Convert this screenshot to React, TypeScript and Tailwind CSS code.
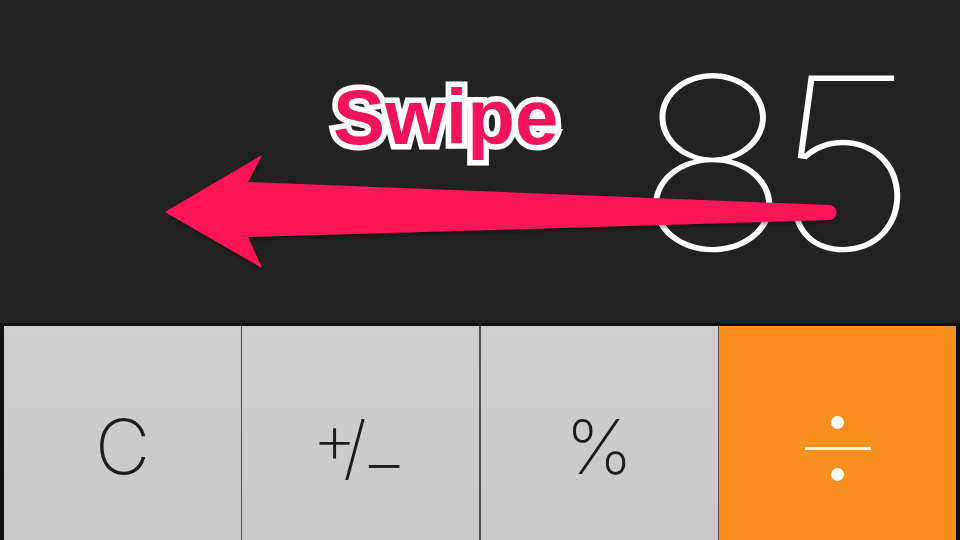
/**
 * CalculatorSwipe - iOS calculator display with a "Swipe" annotation arrow
 */

const KEYS = [
  { label: 'C', kind: 'fn' },
  { label: '+/-', kind: 'fn' },
  { label: '%', kind: 'fn' },
  { label: '÷', kind: 'op' },
] as const

/** Pink annotation arrow pointing left */
function SwipeArrow() {
  return (
    <svg
      className="absolute inset-0 pointer-events-none"
      width="960"
      height="326"
      viewBox="0 0 960 326"
    >
      <defs>
        <filter id="arrowShadow" x="-10%" y="-30%" width="120%" height="160%">
          <feDropShadow dx="1" dy="2" stdDeviation="2" floodColor="#000" floodOpacity="0.45" />
        </filter>
      </defs>
      <path
        d="M165 212 L262 155 L248 182 L829 205 A7.5 7.5 0 0 1 829 220 L248 237 L262 268 Z"
        fill="#ff1659"
        filter="url(#arrowShadow)"
      />
    </svg>
  )
}

function Key({ label, kind }: { label: string; kind: 'fn' | 'op' }) {
  if (kind === 'op') {
    return (
      <div className="h-full flex items-center justify-center bg-[#f7901c]">
        <div className="flex flex-col items-center gap-[18px] w-[66px] translate-y-[2px]" aria-label={label}>
          <span className="w-[13px] h-[13px] rounded-full bg-white" />
          <span className="w-full h-[3px] bg-[#fff4e0]" />
          <span className="w-[13px] h-[13px] rounded-full bg-white" />
        </div>
      </div>
    )
  }

  return (
    <div className="h-full flex items-center justify-center bg-gradient-to-b from-[#cdced1] to-[#c7c8cb] text-[#1c1c1c] font-extralight leading-none">
      {label === '+/-' ? (
        <span className="flex items-start text-[70px] leading-none -translate-x-[5px]">
          <span className="-translate-y-[8px]">+</span>
          <span className="-ml-[14px] translate-y-[1px]">/</span>
          <span className="ml-[2px] -translate-y-[6px]">_</span>
        </span>
      ) : (
        <span className="text-[76px]">{label}</span>
      )}
    </div>
  )
}

export default function App() {
  return (
    <div
      className="w-[960px] h-[540px] overflow-hidden bg-[#222222] flex flex-col"
      style={{ fontFamily: 'Inter, "Noto Sans", sans-serif' }}
    >
      {/* Display */}
      <div className="relative h-[323px] shrink-0 flex justify-end items-start pr-[62px]">
        <span className="mt-[43px] text-[240px] leading-none font-thin text-white tracking-[-19px] scale-x-110 origin-right">
          85
        </span>

        <SwipeArrow />

        {/* Annotation label */}
        <span
          className="absolute left-[333px] top-[78px] text-[78px] leading-none font-bold text-[#f2145a] [paint-order:stroke_fill] [-webkit-text-stroke:11px_white]"
          style={{ fontFamily: '"Liberation Sans", Arial, sans-serif' }}
        >
          Swipe
        </span>
      </div>

      {/* Keypad */}
      <div className="shrink-0 bg-[#111111] px-[4px] pt-[3px]">
        <div className="grid grid-cols-4 gap-[1.5px] bg-[#4f4f4f] h-[240px]">
          {KEYS.map((k) => (
            <Key key={k.label} label={k.label} kind={k.kind} />
          ))}
        </div>
      </div>
    </div>
  )
}
